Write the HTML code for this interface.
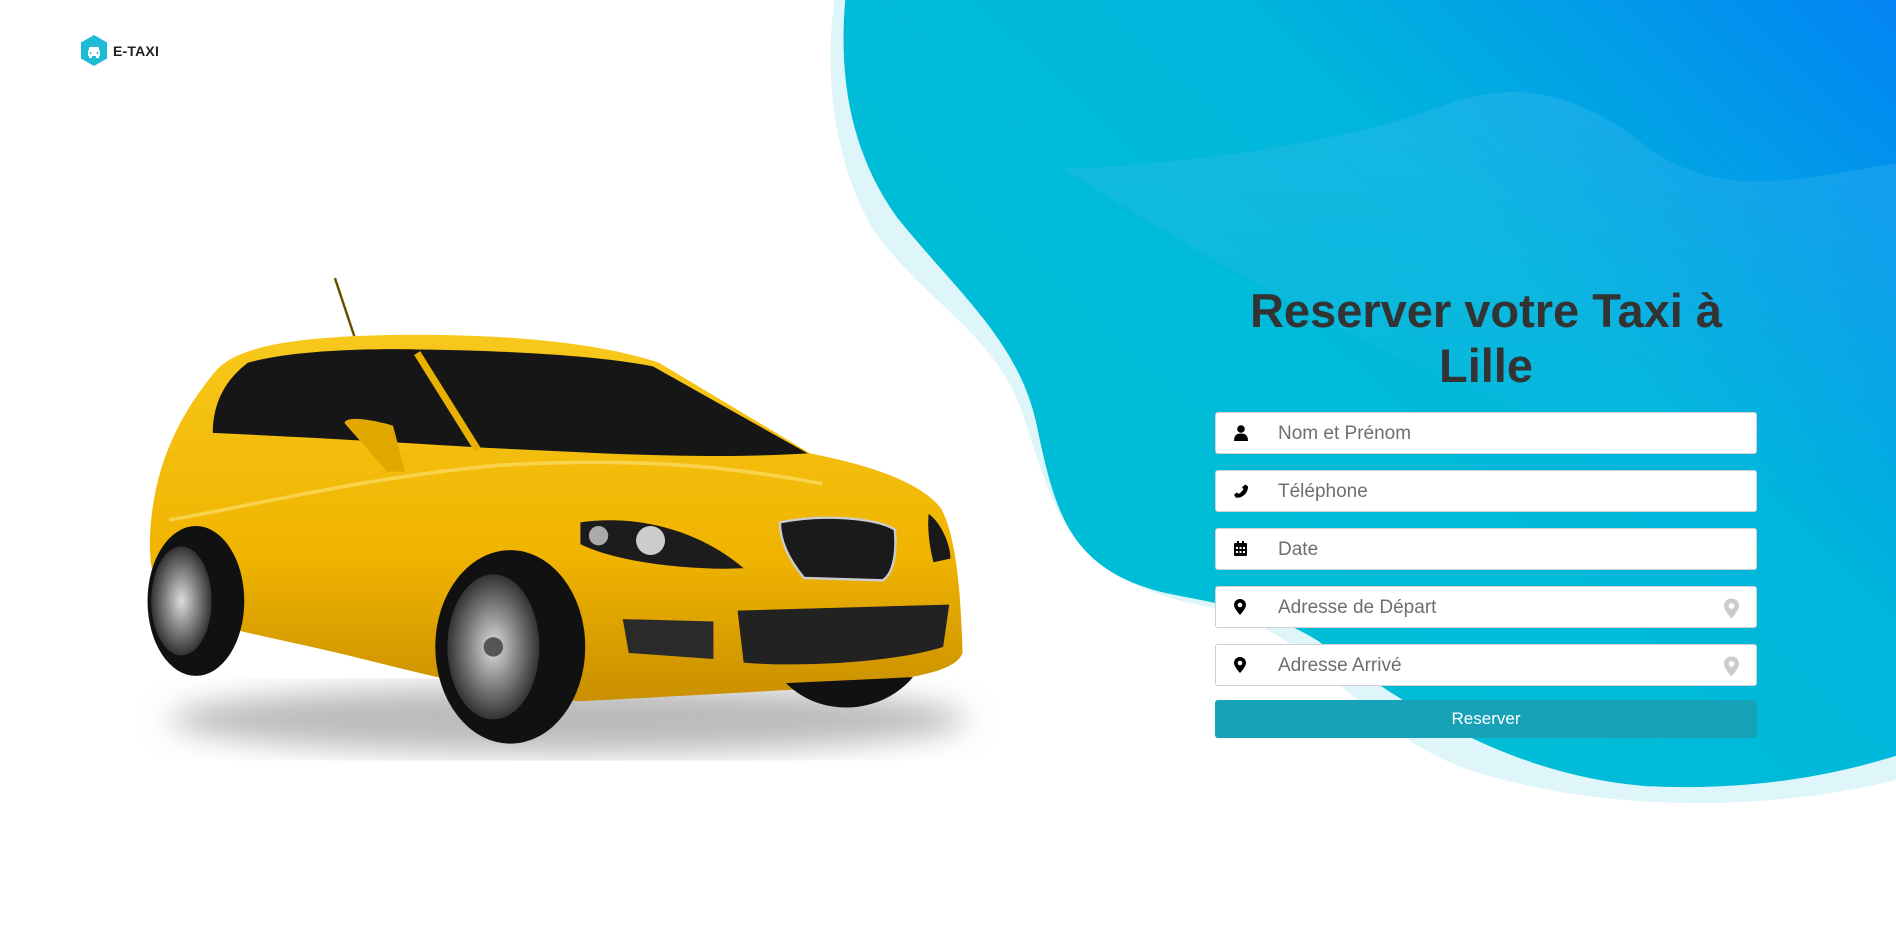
<!DOCTYPE html>
<html><head><meta charset="utf-8"><style>
*{margin:0;padding:0;box-sizing:border-box}
html,body{width:1896px;height:951px;overflow:hidden;background:#fff;font-family:"Liberation Sans",sans-serif}
#bg{position:absolute;left:0;top:0;width:1896px;height:951px}
.logo{position:absolute;left:80px;top:35px;display:flex;align-items:center}
.logo span{font-weight:bold;font-size:14px;color:#222;margin-left:5px;letter-spacing:0.2px}
h1{position:absolute;left:1186px;width:600px;top:283px;text-align:center;font-size:47px;line-height:55px;color:#333;font-weight:bold}
.f{position:absolute;left:1215px;width:542px;height:42px;background:#fff;border:1px solid #d0d0d0;border-radius:3px}
.f svg.i{position:absolute;left:18px;top:12px}
.f .t{position:absolute;left:62px;top:10px;font-size:19px;color:#6b6f73}
.f svg.m{position:absolute;right:17px;top:11px}
.btn{position:absolute;left:1215px;top:700px;width:542px;height:38px;background:#17a2b8;border-radius:3px;color:#fff;font-size:17px;text-align:center;line-height:38px}
</style></head><body>
<svg id="bg" viewBox="0 0 1568 786.5" preserveAspectRatio="none">
<defs>
<linearGradient id="g" x1="0.3" y1="0.55" x2="1" y2="0">
<stop offset="0" stop-color="#00bdd7"/><stop offset="0.45" stop-color="#00b6dc"/><stop offset="1" stop-color="#0384f4"/></linearGradient>
<linearGradient id="wv" x1="0" y1="0" x2="0" y2="1"><stop offset="0" stop-color="#3fb9f0" stop-opacity="0.35"/><stop offset="1" stop-color="#3fb9f0" stop-opacity="0"/></linearGradient>
<linearGradient id="y" x1="0" y1="0" x2="0" y2="1"><stop offset="0" stop-color="#f7c81c"/><stop offset="0.6" stop-color="#f0b400"/><stop offset="1" stop-color="#c98f00"/></linearGradient>
<radialGradient id="w"><stop offset="0" stop-color="#ddd"/><stop offset="0.5" stop-color="#888"/><stop offset="1" stop-color="#333"/></radialGradient>
<filter id="bl"><feGaussianBlur stdDeviation="12"/></filter>
</defs>
<path d="M690,0 C682,60 688,130 722,190 C765,250 822,275 845,340 C868,410 878,455 935,482 C965,496 990,500 1005,503 C1090,525 1120,600 1210,635 C1320,672 1460,672 1568,645 L1568,0 Z" fill="#def5f9"/>
<path d="M699,0 C693,70 706,130 742,180 C792,242 842,282 857,350 C872,420 882,470 962,490 C1010,500 1050,505 1090,530 C1150,575 1240,640 1360,650 C1450,655 1520,640 1568,625 L1568,0 Z" fill="url(#g)"/>
<path d="M880,140 C980,135 1110,120 1200,85 C1260,65 1310,80 1360,120 C1420,165 1480,150 1568,135 L1568,420 C1350,400 1100,280 880,140 Z" fill="url(#wv)"/>
<!-- car -->
<ellipse cx="470" cy="595" rx="330" ry="28" fill="#bbb" filter="url(#bl)"/>
<line x1="277" y1="230" x2="293" y2="278" stroke="#6b4a00" stroke-width="2"/>
<path d="M125,430 C130,380 150,340 180,305 C200,285 250,278 330,277 C430,276 500,285 545,300 L670,375 C720,385 760,398 778,420 C792,445 795,500 796,540 C790,555 760,560 700,568 L480,580 C420,575 360,560 300,545 C240,530 180,520 140,505 C125,485 122,460 125,430 Z" fill="url(#y)"/>
<path d="M176,358 C176,335 185,315 205,300 C240,290 300,288 345,289 C430,290 500,295 540,303 L668,375 C620,378 560,378 480,374 L395,370 C330,366 260,362 176,358 Z" fill="#161616"/>
<path d="M345,292 L395,372" stroke="#e8b000" stroke-width="6"/>
<path d="M285,350 C285,345 300,345 325,352 L335,390 L320,390 Z" fill="#e2a800"/>
<path d="M140,430 C200,420 300,395 410,385 C520,378 600,385 680,400" stroke="#ffe27a" stroke-width="3" fill="none" opacity="0.6"/>
<path d="M480,432 C530,425 580,440 615,470 C570,472 510,465 480,450 Z" fill="#1c1c1c"/>
<circle cx="538" cy="447" r="12" fill="#ccc"/><circle cx="495" cy="443" r="8" fill="#aaa"/>
<path d="M645,432 C680,425 725,428 740,438 C742,460 738,475 730,480 L665,478 C650,460 645,445 645,432 Z" fill="#1a1a1a" stroke="#ccc" stroke-width="2"/>
<path d="M610,505 L785,500 L780,535 C740,548 660,552 615,548 Z" fill="#222"/>
<path d="M515,512 L590,514 L590,545 L520,540 Z" fill="#2a2a2a"/>
<path d="M768,425 C778,432 786,450 786,462 L772,465 C768,450 767,435 768,425 Z" fill="#1a1a1a"/>
<ellipse cx="162" cy="497" rx="40" ry="62" fill="#111"/>
<ellipse cx="150" cy="497" rx="25" ry="45" fill="url(#w)"/>
<ellipse cx="422" cy="535" rx="62" ry="80" fill="#111"/>
<ellipse cx="408" cy="535" rx="38" ry="60" fill="url(#w)"/>
<circle cx="408" cy="535" r="8" fill="#555"/>
<path d="M650,565 C680,595 730,590 755,560 Z" fill="#111"/>
</svg>

<div class="logo">
<svg width="28" height="31" viewBox="0 0 28 31"><path d="M14,0 L27,7.5 L27,23.5 L14,31 L1,23.5 L1,7.5 Z" fill="#1fbad6"/><path d="M8,17 L9.5,12 L18.5,12 L20,17 L20,21 L8,21 Z" fill="#fff"/><rect x="9" y="20" width="3" height="3" fill="#fff"/><rect x="16" y="20" width="3" height="3" fill="#fff"/><circle cx="10.5" cy="18" r="1" fill="#1fbad6"/><circle cx="17.5" cy="18" r="1" fill="#1fbad6"/></svg>
<span>E-TAXI</span></div>

<h1>Reserver votre Taxi à<br>Lille</h1>

<div class="f" style="top:412px"><svg class="i" width="14" height="16" viewBox="0 0 14 16"><circle cx="7" cy="4" r="3.8"/><path d="M0,16 C0,10 3,8.5 7,8.5 C11,8.5 14,10 14,16 Z"/></svg><div class="t">Nom et Prénom</div></div>
<div class="f" style="top:470px"><svg class="i" width="15" height="16" viewBox="0 0 16 16"><path d="M12,1 L15,3 C15,10 9,16 2,15 L0,12 L3,9.5 L5,11 C7,10 9,8 10,6 L8.5,4 Z"/></svg><div class="t">Téléphone</div></div>
<div class="f" style="top:528px"><svg class="i" width="13" height="15" viewBox="0 0 13 15"><rect x="0" y="2" width="13" height="13" rx="1"/><rect x="3" y="0" width="2" height="4"/><rect x="8" y="0" width="2" height="4"/><g fill="#fff"><rect x="2" y="6" width="2" height="2"/><rect x="5.5" y="6" width="2" height="2"/><rect x="9" y="6" width="2" height="2"/><rect x="2" y="10" width="2" height="2"/><rect x="5.5" y="10" width="2" height="2"/><rect x="9" y="10" width="2" height="2"/></g></svg><div class="t">Date</div></div>
<div class="f" style="top:586px"><svg class="i" width="12" height="16" viewBox="0 0 12 16"><path d="M6,0 C9.5,0 12,2.5 12,6 C12,9.5 6,16 6,16 C6,16 0,9.5 0,6 C0,2.5 2.5,0 6,0 Z"/><circle cx="6" cy="6" r="2.3" fill="#fff"/></svg><div class="t">Adresse de Départ</div><svg class="m" width="15" height="21" viewBox="0 0 12 16"><path d="M6,0 C9.5,0 12,2.5 12,6 C12,9.5 6,16 6,16 C6,16 0,9.5 0,6 C0,2.5 2.5,0 6,0 Z" fill="#ccc"/><circle cx="6" cy="6" r="2.3" fill="#fff"/></svg></div>
<div class="f" style="top:644px"><svg class="i" width="12" height="16" viewBox="0 0 12 16"><path d="M6,0 C9.5,0 12,2.5 12,6 C12,9.5 6,16 6,16 C6,16 0,9.5 0,6 C0,2.5 2.5,0 6,0 Z"/><circle cx="6" cy="6" r="2.3" fill="#fff"/></svg><div class="t">Adresse Arrivé</div><svg class="m" width="15" height="21" viewBox="0 0 12 16"><path d="M6,0 C9.5,0 12,2.5 12,6 C12,9.5 6,16 6,16 C6,16 0,9.5 0,6 C0,2.5 2.5,0 6,0 Z" fill="#ccc"/><circle cx="6" cy="6" r="2.3" fill="#fff"/></svg></div>
<div class="btn">Reserver</div>
</body></html>
